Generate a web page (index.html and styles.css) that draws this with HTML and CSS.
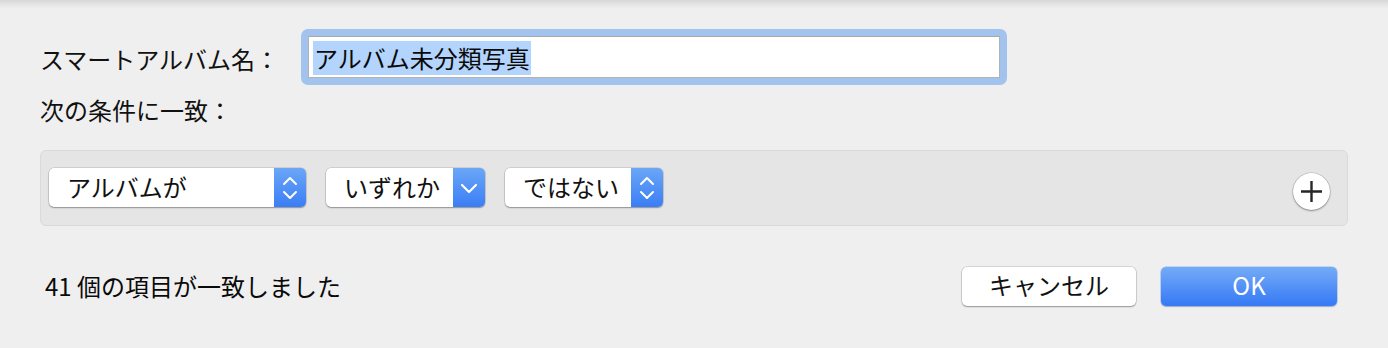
FILE: index.html
```html
<!DOCTYPE html>
<html lang="ja">
<head>
    <meta charset="UTF-8">
    <meta name="viewport" content="width=device-width, initial-scale=1.0">
    <title>スマートアルバム</title>
    <link rel="stylesheet" href="styles.css">
</head>
<body>
    <div class="dialog">
        <div class="name-row">
            <label class="label name-label">スマートアルバム名：</label>
            <div class="focus-ring">
                <div class="text-field"><span class="selected">アルバム未分類写真</span></div>
            </div>
        </div>

        <p class="label match-label">次の条件に一致：</p>

        <div class="rule-panel">
            <div class="popup popup-wide">
                <span class="popup-text">アルバムが</span>
                <span class="popup-arrow">
                    <svg width="16" height="26" viewBox="0 0 16 26"><path d="M2 9 L8 3 L14 9 M2 17 L8 23 L14 17" fill="none" stroke="#fff" stroke-width="2" stroke-linecap="round" stroke-linejoin="round"/></svg>
                </span>
            </div>
            <div class="popup popup-pull">
                <span class="popup-text">いずれか</span>
                <span class="popup-arrow">
                    <svg width="18" height="12" viewBox="0 0 18 12"><path d="M2 3 L9 10 L16 3" fill="none" stroke="#fff" stroke-width="2.2" stroke-linecap="round" stroke-linejoin="round"/></svg>
                </span>
            </div>
            <div class="popup popup-short">
                <span class="popup-text">ではない</span>
                <span class="popup-arrow">
                    <svg width="16" height="26" viewBox="0 0 16 26"><path d="M2 9 L8 3 L14 9 M2 17 L8 23 L14 17" fill="none" stroke="#fff" stroke-width="2" stroke-linecap="round" stroke-linejoin="round"/></svg>
                </span>
            </div>
            <button class="add-button" aria-label="追加">
                <svg width="23" height="23" viewBox="0 0 23 23"><path d="M11.5 1 V22 M1 11.5 H22" stroke="#262626" stroke-width="2.4"/></svg>
            </button>
        </div>

        <div class="footer">
            <span class="count">41 個の項目が一致しました</span>
            <div class="buttons">
                <button class="btn btn-cancel">キャンセル</button>
                <button class="btn btn-ok">OK</button>
            </div>
        </div>
    </div>
</body>
</html>
```

FILE: styles.css
```css
html, body {
    margin: 0;
    padding: 0;
}

body {
    font-family: "Noto Sans CJK JP", "Noto Sans", sans-serif;
    background: linear-gradient(to bottom, #d6d6d6 0px, #e4e4e4 4px, #efefef 9px, #efefef 100%);
    color: #111;
    width: 1388px;
    height: 348px;
    overflow: hidden;
}

.dialog {
    padding: 29px 51px 0 40px;
}

.label {
    font-size: 24px;
    line-height: 30px;
    margin: 0;
}

/* name row */
.name-row {
    display: flex;
    align-items: center;
    height: 56px;
}

.name-label {
    width: 261px;
    margin-top: 3px;
}

.focus-ring {
    width: 692px;
    height: 42px;
    padding: 7px;
    border-radius: 7px;
    background-color: #a2c3ee;
}

.text-field {
    box-sizing: border-box;
    height: 42px;
    background-color: #fff;
    border: 1px solid #b3b3b3;
    border-top-color: #a8a8a8;
    padding: 4px 0 0 4px;
}

.selected {
    display: inline-block;
    background-color: #b3d4fc;
    font-size: 24px;
    line-height: 34px;
    padding: 0 1px;
    color: #0a0a0a;
}

.match-label {
    margin-top: 10px;
}

/* rule panel */
.rule-panel {
    box-sizing: border-box;
    margin-top: 25px;
    width: 1308px;
    height: 76px;
    background-color: #e5e5e5;
    border: 1px solid #dadada;
    border-radius: 6px;
    padding: 17px 17px 0 8px;
    display: flex;
    align-items: flex-start;
    gap: 20px;
}

.popup {
    display: flex;
    height: 39px;
    background-color: #fff;
    border-radius: 5px;
    box-shadow: 0 0 0 0.5px rgba(0, 0, 0, 0.18), 0 1px 1.5px rgba(0, 0, 0, 0.3);
    overflow: hidden;
}

.popup-wide { width: 257px; }
.popup-pull { width: 159px; }
.popup-short { width: 158px; }

.popup-text {
    flex: 1;
    font-size: 24px;
    line-height: 37px;
    padding-left: 18px;
    color: #111;
}

.popup-arrow {
    width: 32px;
    display: flex;
    align-items: center;
    justify-content: center;
    background: linear-gradient(to bottom, #6ba6f7, #3a7ef6);
}

.add-button {
    margin-left: auto;
    margin-top: 5px;
    width: 37px;
    height: 37px;
    border: none;
    border-radius: 50%;
    background-color: #fff;
    box-shadow: 0 0 0 0.5px rgba(0, 0, 0, 0.2), 0 1px 2px rgba(0, 0, 0, 0.35);
    display: flex;
    align-items: center;
    justify-content: center;
    padding: 0;
}

/* footer */
.footer {
    margin-top: 41px;
    display: flex;
    align-items: center;
    justify-content: space-between;
}

.count {
    font-size: 24px;
    line-height: 30px;
    padding-left: 5px;
    margin-top: -2px;
    color: #0a0a0a;
}

.buttons {
    display: flex;
    gap: 25px;
}

.btn {
    height: 39px;
    border: none;
    border-radius: 5px;
    font-family: inherit;
    font-size: 24px;
    line-height: 35px;
    padding: 0 0 4px;
}

.btn-cancel {
    width: 174px;
    background-color: #fff;
    color: #111;
    box-shadow: 0 0 0 0.5px rgba(0, 0, 0, 0.2), 0 1px 1.5px rgba(0, 0, 0, 0.3);
}

.btn-ok {
    width: 176px;
    color: #fff;
    background: linear-gradient(to bottom, #74abf7, #3579f5);
    box-shadow: 0 0 0 0.5px rgba(40, 100, 220, 0.4), 0 1px 1.5px rgba(0, 0, 0, 0.2);
}
```
